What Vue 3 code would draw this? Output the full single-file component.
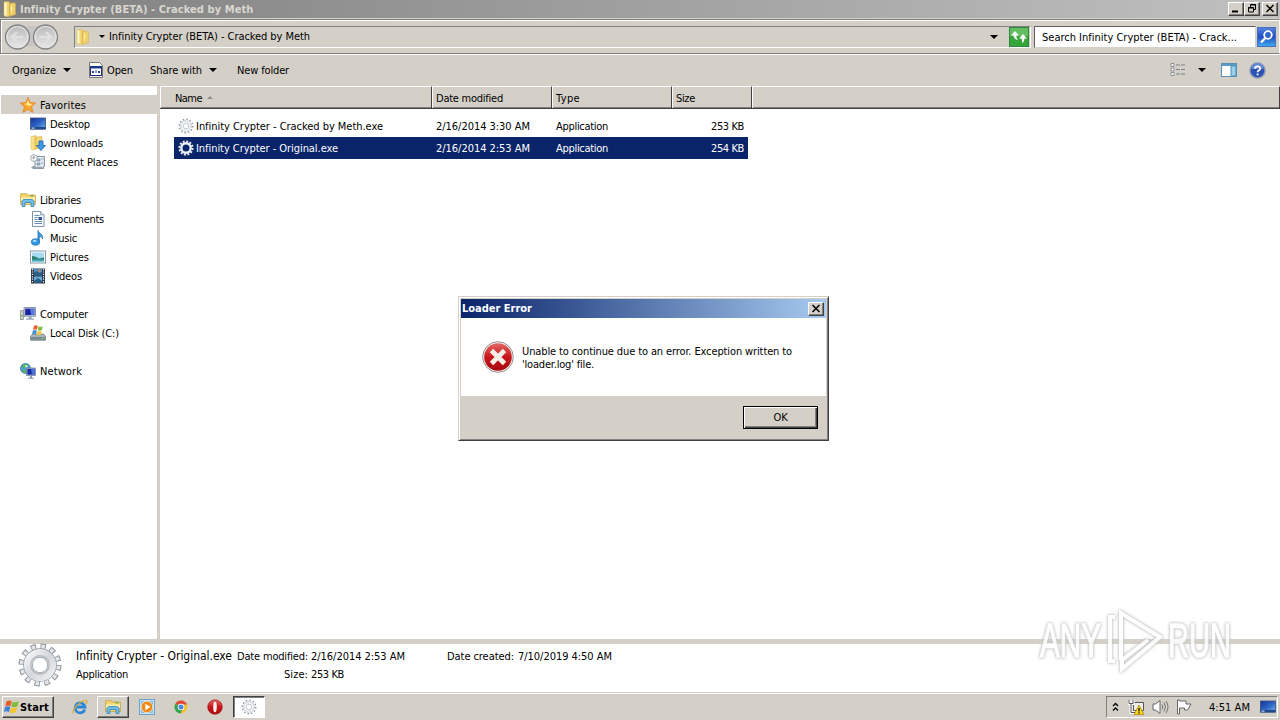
<template>
  <div class="screen">
    <svg class="sprite" width="0" height="0">
      <defs>
        <linearGradient id="gFolder" x1="0" x2="1"><stop offset="0" stop-color="#fdf0a0" /><stop offset="1" stop-color="#ecca5e" /></linearGradient>
        <linearGradient id="gBall" x1="0" x2="0" y1="0" y2="1"><stop offset="0" stop-color="#b8b8b8" /><stop offset=".5" stop-color="#d2d2d2" /><stop offset="1" stop-color="#e8e8e8" /></linearGradient>
        <linearGradient id="gScreen" x1="0" x2="1" y1="0" y2="1"><stop offset="0" stop-color="#16349a" /><stop offset=".5" stop-color="#2c62c4" /><stop offset="1" stop-color="#6fb0ee" /></linearGradient>
        <linearGradient id="gGear" x1="0" x2="1" y1="0" y2="1"><stop offset="0" stop-color="#f4f5f6" /><stop offset=".5" stop-color="#d3d7db" /><stop offset="1" stop-color="#eceeef" /></linearGradient>
        <linearGradient id="gRed" x1="0" x2="0" y1="0" y2="1"><stop offset="0" stop-color="#e26a66" /><stop offset=".5" stop-color="#c8161b" /><stop offset="1" stop-color="#a90a10" /></linearGradient>
        <linearGradient id="gGo" x1="0" x2="0" y1="0" y2="1"><stop offset="0" stop-color="#5b86e0" /><stop offset=".5" stop-color="#1f4fc8" /><stop offset="1" stop-color="#43b4f0" /></linearGradient>
      </defs>
      <symbol id="i-folder" viewBox="0 0 16 16">
        <path d="M2 1l4-.6 1.500.8V15.300l-4 .3-1.500-1z" fill="url(#gFolder)" stroke="#dcb94e" stroke-width=".5" />
        <path d="M7.500 2.600l4.500-.9 1.500 1V13.500l-6 1.800z" fill="#efd06a" stroke="#d2ad48" stroke-width=".5" />
        <path d="M3.500 2v12" stroke="#fffbd8" stroke-width="1.500" /><path d="M9 4l1.500 3L9 13z" fill="#fff3b4" />
      </symbol>
      <symbol id="i-app" viewBox="0 0 16 16">
        <path d="M1.500.5h10l3 3v12h-13z" fill="#fff" stroke="#777" />
        <rect x="2.500" y="4.500" width="11" height="9" fill="#fff" stroke="#1b2c78" />
        <path d="M2.500 5.500h11" stroke="#1b3c98" stroke-width="2" />
        <path d="M4 9h2v2H4zM7.500 8h1v3h-1zM10 9h2v2h-2z" fill="#23419c" />
      </symbol>
      <symbol id="i-star" viewBox="0 0 16 16">
        <path d="M8 .6l2.200 5 5.300.5-4 3.600 1.300 5.500L8 12.300 3.200 15.200l1.300-5.500-4-3.600 5.300-.5z" fill="#f8a92d" stroke="#df7b18" stroke-width=".8" />
        <path d="M8 3l1.500 3.600 3.300.3-3 2L8 8.500 4.500 7l2-.4z" fill="#ffe58e" />
      </symbol>
      <symbol id="i-desktop" viewBox="0 0 16 16">
        <rect x=".5" y="2" width="15" height="11" fill="url(#gScreen)" stroke="#3c4f78" stroke-width=".8" />
        <path d="M.5 11h15v2.500H.5z" fill="#224a8a" /><path d="M1.500 11.500h3v1.200h-3z" fill="#bcd6f4" />
      </symbol>
      <symbol id="i-downloads" viewBox="0 0 16 16">
        <path d="M1 1.500l5-1V14l-4 1-1-1z" fill="url(#gFolder)" stroke="#d0a840" stroke-width=".5" />
        <path d="M6 2l6-.5V13l-6 1z" fill="#f1d675" stroke="#d0a840" stroke-width=".5" />
        <path d="M9 6h4v4.500h2.500l-4.500 5-4.500-5H9z" fill="#3c9be4" stroke="#1f5fae" stroke-width=".8" />
      </symbol>
      <symbol id="i-recent" viewBox="0 0 16 16">
        <path d="M5 2.500h9.500v10h-1v2H3v-2h2z" fill="#e4eaf0" stroke="#7d8b99" stroke-width=".9" />
        <path d="M7 5h3v2H7zm4 0h2.500M7 9h3v2H7zm4 0h2.500" fill="#a9bacb" stroke="#7890a8" stroke-width=".7" />
        <circle cx="4" cy="4" r="3.400" fill="#f4f6f8" stroke="#8d99a5" stroke-width=".8" />
        <path d="M4 2v2.200H2.500" fill="none" stroke="#557" stroke-width=".8" />
        <path d="M1.500 13.500h11" stroke="#97a5b3" stroke-width="1.500" />
      </symbol>
      <symbol id="i-libraries" viewBox="0 0 16 16">
        <path d="M.6 3V1.700h6l1 1.300h7.800v9.500H.6z" fill="#f3d570" stroke="#c99b34" stroke-width=".7" />
        <path d="M1 5.500h14v3H1z" fill="#fdf0ac" />
        <path d="M2 14.500V9.300l1.500-1.800h9l1.500 1.800v5.200h-3v-4H5v4z" fill="#72bde6" stroke="#2f86bd" stroke-width=".8" />
        <path d="M10.500 3.800h3" stroke="#4aa03a" />
      </symbol>
      <symbol id="i-documents" viewBox="0 0 16 16">
        <path d="M2.500.5h8l3.500 3.300v11.700H2.500z" fill="#fbfdff" stroke="#7f94ab" />
        <path d="M10.500.5v3.500H14" fill="#d5e2ee" stroke="#7f94ab" stroke-width=".8" />
        <path d="M4.500 4.500h5M4.500 6.500h3M4.500 8.500h3M4.500 10.500h7.500M4.500 12.500h7.500" stroke="#6d8db4" />
        <path d="M8.500 6h3.500v3H8.500z" fill="#2c5892" />
      </symbol>
      <symbol id="i-music" viewBox="0 0 16 16">
        <path d="M8 .5c1 3 5.500 4 4.500 8.500C12 7 10.500 6 9.200 6v6.500H8z" fill="#3e9fe0" stroke="#2677be" stroke-width=".9" />
        <ellipse cx="5.500" cy="12" rx="4.200" ry="3.300" fill="#2f93dc" stroke="#1d6cb3" stroke-width=".6" />
        <ellipse cx="4.700" cy="11" rx="2" ry="1.200" fill="#9bd5f8" />
      </symbol>
      <symbol id="i-pictures" viewBox="0 0 16 16">
        <rect x=".5" y="2" width="15" height="12" fill="#fff" stroke="#8398a8" />
        <path d="M2 3.500h12v9H2z" fill="#a6daf0" /><path d="M2 7l3 .5L9 9.500l5-1v3H2z" fill="#2f8072" />
        <path d="M2 10.500h12v2H2z" fill="#45a8b8" />
      </symbol>
      <symbol id="i-videos" viewBox="0 0 16 16">
        <path d="M1 .5h14v15H1z" fill="#26323e" />
        <path d="M4 1h8v6.500H4z" fill="#4b90c4" /><path d="M4 8.500h8V15H4z" fill="#67b0dc" />
        <path d="M4 5l3-2 2 2 3-1v3.500H4zM4 13l4-3 4 3v2H4z" fill="#2a5c86" /><circle cx="9.500" cy="3" r="1.200" fill="#d98245" />
        <path d="M2.500 1v14M13.500 1v14" stroke="#eef" stroke-width="1.300" stroke-dasharray="1.200 1.200" />
      </symbol>
      <symbol id="i-computer" viewBox="0 0 16 16">
        <path d="M.6 4.500h2.800v9H.6z" fill="#cfd6cf" stroke="#75806f" stroke-width=".7" /><path d="M1.200 9h1.500v1.500H1.200z" fill="#6ab43e" />
        <path d="M4 1.500h11.500v8.800H4z" fill="#c9cfe0" stroke="#75809c" stroke-width=".8" />
        <path d="M5.200 2.700h9.100v6.400H5.200z" fill="#1722a4" /><path d="M10 2.700h4.300v6.400H11z" fill="#5a78dc" />
        <path d="M8.500 10.500h3v2H14v1.200H6v-1.200h2.500z" fill="#9aa3b5" />
      </symbol>
      <symbol id="i-disk" viewBox="0 0 16 16">
        <path d="M2.500 9h11l2 2.500v3.800H.5v-3.800z" fill="#a7b4ba" stroke="#6b7a80" stroke-width=".7" />
        <path d="M1 12h14v2.800H1z" fill="#76898f" /><path d="M11.500 12.800h2v1.200h-2z" fill="#7be04c" />
        <path d="M4 .8q2-1.100 3.800 0L7 4.700q-2-1-4 0z" fill="#e8602c" /><path d="M8.500 1.200q2 1 4.200 0l-.9 4q-2 .8-4 0z" fill="#82bb3c" />
        <path d="M2.900 5.500q2-.9 3.900 0L6 9.300q-2-1-4 0z" fill="#3f8fd6" /><path d="M7.600 5.900q2 .9 4 0l-.9 3.800q-2 .9-3.900 0z" fill="#f6c52f" />
      </symbol>
      <symbol id="i-network" viewBox="0 0 16 16">
        <circle cx="5.500" cy="5.500" r="5" fill="#4fa0d8" stroke="#286ca0" stroke-width=".7" />
        <path d="M2 2.500Q5 .5 8 1.500L6 4 3 5zM2 7l3.500-.5L6 9.500l-2 .8z" fill="#58b64b" /><path d="M5 2l3 1-2 2z" fill="#e2f6d4" />
        <path d="M6.500 5h9v7.500h-9z" fill="#c0c9dd" stroke="#6c7896" stroke-width=".7" /><path d="M7.300 5.800h7.500v5.900H7.300z" fill="#1829a8" />
        <path d="M11 5.800h3.800v5.900H12z" fill="#4b72d8" /><path d="M10 12.700h2v2h2v1H8v-1h2z" fill="#8e98ac" />
      </symbol>
      <symbol id="i-gear" viewBox="0 0 44 44">
        <circle cx="22" cy="22" r="18.500" fill="none" stroke="#8a929a" stroke-width="6" stroke-dasharray="5.200 4.486" />
        <circle cx="22" cy="22" r="18" fill="none" stroke="#e4e7ea" stroke-width="5" stroke-dasharray="3.400 6.024" stroke-dashoffset="-.8" />
        <circle cx="22" cy="22" r="12" fill="none" stroke="#8d959c" stroke-width="9.500" />
        <circle cx="22" cy="22" r="12" fill="none" stroke="url(#gGear)" stroke-width="8.200" />
        <circle cx="22" cy="22" r="9.200" fill="none" stroke="#b4babf" stroke-width="1.400" />
      </symbol>
      <symbol id="i-cog" viewBox="0 0 16 16">
        <circle cx="8" cy="8" r="6.600" fill="none" stroke="currentColor" stroke-width="2" stroke-dasharray="1.900 1.556" />
        <circle cx="8" cy="8" r="4.700" fill="none" stroke="currentColor" stroke-width="2.400" />
      </symbol>
      <symbol id="i-cogline" viewBox="0 0 16 16">
        <circle cx="8" cy="8" r="6.700" fill="none" stroke="#8c9aa5" stroke-width="1.500" stroke-dasharray="1.500 2.008" />
        <circle cx="8" cy="8" r="5.300" fill="#f2f4f5" stroke="#b1bbc2" stroke-width=".9" stroke-dasharray="2 .8" />
        <circle cx="8" cy="8" r="2.700" fill="#fff" stroke="#94a1aa" stroke-width=".9" stroke-dasharray="1.500 .8" />
      </symbol>
      <symbol id="i-flag" viewBox="0 0 16 16">
        <path d="M2.500 2.300q2.700-1.700 5.200 0L6.500 7.200q-2.700-1.400-5.200 0z" fill="#e8592a" /><path d="M8.500 2.700q2.700 1.400 6.300-.5l-1.400 5q-3 1.600-6 .4z" fill="#80ba3a" />
        <path d="M1.100 8q2.500-1.400 5.200 0L5 13q-2.600-1.400-5 0z" fill="#3a80d6" /><path d="M7.200 8.400q2.800 1.300 6-.4l-1.400 5q-3 1.600-6 .4z" fill="#f8c22c" />
      </symbol>
      <symbol id="i-ie" viewBox="0 0 16 16">
        <path d="M12.800 10.500A5 5 0 1 1 13 8H4" fill="none" stroke="#2b86d8" stroke-width="2.800" />
        <path d="M1.500 14.500C-.5 11 8 1 14.500 1.500c1 .5.500 2-.5 3.500" fill="none" stroke="#d9b02e" stroke-width="1.200" />
      </symbol>
      <symbol id="i-media" viewBox="0 0 16 16">
        <rect x=".5" y=".5" width="15" height="15" fill="#c9e1f4" stroke="#69a3d0" /><rect x="2" y="2" width="12" height="12" fill="#8dbde4" />
        <circle cx="8" cy="8" r="5.800" fill="#f28a17" stroke="#fff1d8" stroke-width=".7" /><path d="M6.300 4.800v6.400L11.500 8z" fill="#fff" />
      </symbol>
      <symbol id="i-chrome" viewBox="0 0 16 16">
        <circle cx="8" cy="8" r="6.500" fill="#f2c32c" /><path d="M8 8L2.400 4.700A6.500 6.500 0 0 1 14 5.500H8z" fill="#df4a3c" />
        <path d="M8 8L2.400 4.700A6.500 6.500 0 0 0 7.500 14.500l2-4z" fill="#35a353" />
        <circle cx="8" cy="8" r="3.300" fill="#fff" /><circle cx="8" cy="8" r="2.500" fill="#4b87e2" />
      </symbol>
      <symbol id="i-opera" viewBox="0 0 16 16">
        <circle cx="8" cy="8" r="7.300" fill="url(#gRed)" stroke="#9c1014" stroke-width=".6" /><ellipse cx="8" cy="8" rx="1.800" ry="5.300" fill="#f6eeee" />
      </symbol>
    </svg>

    <header class="titlebar">
      <svg class="ico"><use href="#i-folder" /></svg>
      <b v-fit="233">Infinity Crypter (BETA) - Cracked by Meth</b>
      <div class="win-buttons">
        <button class="wb"><svg width="12" height="10"><path d="M3 8.500h6" stroke="#000" stroke-width="2" /></svg></button>
        <button class="wb"><svg width="13" height="11"><path d="M5.500 4V1.500h5v5H8M5 2h6" fill="none" stroke="#000" /><path d="M3.500 4.500h5v4.500h-5zM3 5h6" fill="none" stroke="#000" /></svg></button>
        <button class="wb last"><svg width="12" height="10"><path d="M3.500 2l7 7M10.500 2l-7 7" stroke="#000" stroke-width="1.500" /></svg></button>
      </div>
    </header>

    <nav class="navbar">
      <svg class="balls" width="58" height="30">
        <path d="M17 4h28v20H17z" fill="#c6c5c3" />
        <g v-for="x in [15.5, 43.5]" :key="x">
          <circle :cx="x" cy="15" r="12" fill="url(#gBall)" stroke="#858585" stroke-width="1.300" />
          <circle :cx="x" cy="15" r="10.500" fill="none" stroke="#e6e6e6" stroke-width="1" />
        </g>
        <path d="M21.500 15h-11M15 10l-5 5 5 5M37.500 15h11M44 10l5 5-5 5" fill="none" stroke="#e0e0e0" stroke-width="2.400" />
      </svg>
      <div class="address">
        <svg class="ico"><use href="#i-folder" /></svg>
        <i class="arrow small"></i>
        <span v-fit="201">Infinity Crypter (BETA) - Cracked by Meth</span>
        <i class="arrow drop"></i>
        <svg class="refresh" width="20" height="20">
          <rect width="20" height="20" fill="#35a53c" /><path d="M0 0h20v9H0z" fill="#63bd62" />
          <rect x=".5" y=".5" width="19" height="19" fill="none" stroke="#2e8a38" />
          <path d="M6 4L2 8.500h2.500q.5 4 4.500 4.500Q7 11 7.500 8.500H10zM14 7l4 4.500h-2.500q-.5 4-2.500 4.500.5-2-.5-4.500H10z" fill="#fff" />
        </svg>
      </div>
      <div class="search"><span v-fit="195">Search Infinity Crypter (BETA) - Crack...</span></div>
      <svg class="go" width="19" height="20">
        <rect width="19" height="20" fill="url(#gGo)" /><rect x=".5" y=".5" width="18" height="19" fill="none" stroke="#4a70b8" />
        <circle cx="11" cy="8" r="3.800" fill="#2d66ca" stroke="#fff" stroke-width="1.800" /><path d="M8.300 11L4 15.500" stroke="#fff" stroke-width="2.400" />
      </svg>
    </nav>

    <div class="toolbar">
      <span v-fit="44">Organize</span><i class="arrow"></i>
      <svg class="ico open"><use href="#i-app" /></svg><span v-fit="26">Open</span>
      <span v-fit="52" class="share">Share with</span><i class="arrow"></i>
      <span v-fit="52" class="newf">New folder</span>
      <svg class="views" width="16" height="14">
        <path d="M1 .5h3v3H1zM1 5h3v3H1zM1 9.500h3v3H1z" fill="#fff" stroke="#8b9097" /><path d="M6 2h4M11 2h4M6 6.500h4M11 6.500h4M6 11h4M11 11h4" stroke="#7b8088" />
      </svg>
      <i class="arrow"></i>
      <svg class="pane" width="16" height="14">
        <rect x=".5" y=".5" width="15" height="13" fill="#fff" stroke="#588fb4" /><path d="M1 2h14" stroke="#5c9cc3" stroke-width="2" />
        <path d="M10 3h5v10h-5z" fill="#9bd0e8" stroke="#4a8fb8" />
      </svg>
      <svg class="help" width="17" height="17">
        <circle cx="8.500" cy="8.500" r="7.500" fill="#2c50b4" stroke="#8796b4" stroke-width="1.500" /><path d="M2.500 7a6 6 0 0 1 12 0z" fill="#6488d6" />
        <path d="M6 6.700q0-2.400 2.600-2.400t2.600 2.100q0 1.400-1.600 2.200-1 .5-1 1.700" fill="none" stroke="#fff" stroke-width="1.700" /><path d="M7.700 11.500h1.800v1.800H7.700z" fill="#fff" />
      </svg>
    </div>

    <div class="body">
      <aside class="sidebar">
        <div v-for="(item, i) in places" :key="i" class="place" :class="{ child: item.child, current: i === 0 }">
          <template v-if="item.label">
            <svg class="ico"><use :href="'#i-' + item.icon" /></svg>
            <span v-fit="item.w">{{ item.label }}</span>
          </template>
        </div>
      </aside>
      <div class="splitter"></div>
      <main class="files">
        <div class="columns">
          <div class="col name"><span v-fit="27">Name</span><i class="sort"></i></div>
          <div class="col date"><span v-fit="67">Date modified</span></div>
          <div class="col type"><span v-fit="24">Type</span></div>
          <div class="col size"><span v-fit="19">Size</span></div>
          <div class="col rest"></div>
        </div>
        <div class="rows">
          <div v-for="file in files" :key="file.name" class="row" :class="{ selected: file.selected }">
            <svg class="ico"><use :href="file.selected ? '#i-cog' : '#i-cogline'" /></svg>
            <div class="c-name"><span v-fit="file.w">{{ file.name }}</span></div>
            <div class="c-date"><span v-fit="94">{{ file.date }}</span></div>
            <div class="c-type"><span v-fit="52">Application</span></div>
            <div class="c-size"><span v-fit="33">{{ file.size }}</span></div>
          </div>
        </div>
      </main>
    </div>

    <footer class="details">
      <svg class="big-gear" width="44" height="44"><use href="#i-gear" /></svg>
      <div class="d1"><span v-fit="156" class="big">Infinity Crypter - Original.exe</span><span v-fit="52">Application</span></div>
      <div class="d2"><span v-fit="71">Date modified:</span><span v-fit="24">Size:</span></div>
      <div class="d3"><span v-fit="94">2/16/2014 2:53 AM</span><span v-fit="33">253 KB</span></div>
      <div class="d4"><span v-fit="67">Date created:</span></div>
      <div class="d3"><span v-fit="94">7/10/2019 4:50 AM</span></div>
    </footer>

    <div class="taskbar">
      <button class="start"><svg class="ico"><use href="#i-flag" /></svg><b v-fit="29">Start</b></button>
      <div class="task ie"><svg class="ico"><use href="#i-ie" /></svg></div>
      <div class="task raised"><svg class="ico"><use href="#i-libraries" /></svg></div>
      <div class="task media"><svg class="ico"><use href="#i-media" /></svg></div>
      <div class="task"><svg class="ico"><use href="#i-chrome" /></svg></div>
      <div class="task"><svg class="ico"><use href="#i-opera" /></svg></div>
      <div class="task pressed"><svg class="ico"><use href="#i-cogline" /></svg></div>
      <div class="tray">
        <svg class="chev" width="7" height="10"><path d="M1 4l2.500-2.500L6 4M1 8.500L3.500 6 6 8.500" fill="none" stroke="#000" stroke-width="1.300" /></svg>
        <svg class="t-net" width="17" height="16">
          <path d="M5.500 3.500h10v8h-10z" fill="#eee" stroke="#555" />
          <path d="M1 .5v4h4v-4M3 5v8.500h5" fill="none" stroke="#fff" stroke-width="3" />
          <path d="M1 .5v4h4v-4M3 5v8.500h5" fill="none" stroke="#555" />
          <path d="M11 6l5 9.500H6z" fill="#f7d61f" stroke="#b38c10" stroke-width=".8" /><path d="M11 9v3.500M11 13.300v1.200" stroke="#222" stroke-width="1.400" />
        </svg>
        <svg class="t-vol" width="17" height="16">
          <path d="M1 5h2.500L8 1.500v13L3.500 11H1z" fill="#fff" stroke="#666" /><path d="M10 5.500q1.500 2.500 0 5M12 3.500q3 4.500 0 9M14 2q4 6 0 12" fill="none" stroke="#777" />
        </svg>
        <svg class="t-flag" width="17" height="16"><path d="M1.500 1v14h2v-6h5v2h3l3.500-6h-5V2h-6.500V1z" fill="#fff" stroke="#666" /></svg>
        <span v-fit="41">4:51 AM</span>
        <svg class="ico t-desk"><use href="#i-desktop" /></svg>
      </div>
    </div>

    <svg class="watermark" width="210" height="76" viewBox="0 0 210 76">
      <g class="mark">
        <text x="6" y="52" textLength="61" lengthAdjust="spacingAndGlyphs">ANY</text>
        <text x="134" y="52" textLength="63" lengthAdjust="spacingAndGlyphs">RUN</text>
        <path d="M81 12h-5v44h5M87 55V8l39 24-38 32v-9l26-20" fill="none" stroke="#fff" stroke-width="4" />
      </g>
    </svg>

    <section class="dialog">
      <div class="dialog-title">
        <b v-fit="70">Loader Error</b>
        <button class="wb"><svg width="12" height="10"><path d="M3.500 2l7 7M10.500 2l-7 7" stroke="#000" stroke-width="1.500" /></svg></button>
      </div>
      <div class="dialog-body">
        <svg width="32" height="32">
          <circle cx="16" cy="16" r="15.300" fill="#f3efef" stroke="#9b8d8d" /><circle cx="16" cy="16" r="13.800" fill="url(#gRed)" />
          <path d="M9.500 9.500l13 13M22.500 9.500l-13 13" stroke="#f3efe8" stroke-width="4.800" />
        </svg>
        <p><span v-fit="270">Unable to continue due to an error. Exception written to</span><span v-fit="72">'loader.log' file.</span></p>
      </div>
      <div class="dialog-foot"><button class="ok"><span v-fit="14">OK</span></button></div>
    </section>
  </div>
</template>

<script setup>
// spreads a label over its Tahoma width, whatever sans font is installed
const vFit = {
  mounted(el, { value }) {
    const natural = el.getBoundingClientRect().width
    el.style.letterSpacing = (value - natural) / el.textContent.length + 'px'
  }
}

const places = [
  { label: 'Favorites', icon: 'star', w: 46 },
  { label: 'Desktop', icon: 'desktop', w: 40, child: true },
  { label: 'Downloads', icon: 'downloads', w: 53, child: true },
  { label: 'Recent Places', icon: 'recent', w: 68, child: true },
  {},
  { label: 'Libraries', icon: 'libraries', w: 41 },
  { label: 'Documents', icon: 'documents', w: 54, child: true },
  { label: 'Music', icon: 'music', w: 27, child: true },
  { label: 'Pictures', icon: 'pictures', w: 39, child: true },
  { label: 'Videos', icon: 'videos', w: 32, child: true },
  {},
  { label: 'Computer', icon: 'computer', w: 48 },
  { label: 'Local Disk (C:)', icon: 'disk', w: 69, child: true },
  {},
  { label: 'Network', icon: 'network', w: 42 }
]

const files = [
  { name: 'Infinity Crypter - Cracked by Meth.exe', date: '2/16/2014 3:30 AM', size: '253 KB', w: 187 },
  { name: 'Infinity Crypter - Original.exe', date: '2/16/2014 2:53 AM', size: '254 KB', w: 142, selected: true }
]
</script>

<style>
body { margin: 0; overflow: hidden; }
</style>

<style scoped>
.screen {
  position: relative;
  width: 1280px;
  height: 720px;
  overflow: hidden;
  display: flex;
  flex-direction: column;
  background: #d4d0c8;
  color: #000;
  font: 11px/13px "DejaVu Sans Condensed", "DejaVu Sans", sans-serif;
  font-stretch: condensed;
}
.screen * { box-sizing: border-box; }
.sprite { position: absolute; }
span, b { white-space: nowrap; flex: none; }
svg { flex: none; display: block; }
.ico { width: 16px; height: 16px; }
button { font: inherit; padding: 0; }
.titlebar {
  height: 18px;
  flex: none;
  display: flex;
  align-items: center;
  padding-left: 2px;
  background: linear-gradient(90deg, #808080, #c0c0c0);
  color: #dad7d0;
}
.titlebar b { margin-left: 2px; }
.win-buttons { margin-left: auto; display: flex; padding-right: 2px; }
.wb {
  width: 16px;
  height: 14px;
  background: #d4d0c8;
  border: 1px solid;
  border-color: #fff #404040 #404040 #fff;
  box-shadow: inset -1px -1px #808080;
  display: flex;
}
.wb.last { margin-left: 2px; }
.navbar {
  height: 35px;
  flex: none;
  margin-top: 1px;
  display: flex;
  align-items: center;
  border: 1px solid #808080;
  border-right-color: #fff;
  box-shadow: inset 1px 1px #fff, 0 1px #fff;
  padding-left: 1px;
}
.address {
  margin-left: 14px;
  width: 957px;
  height: 22px;
  display: flex;
  align-items: center;
  padding-right: 1px;
  border: 1px solid;
  border-color: #808080 #fff #fff #808080;
}
.arrow { flex: none; width: 0; border: 4px solid transparent; border-top-color: #000; border-bottom: 0; }
.arrow.small { border-width: 3px; border-bottom: 0; margin: 0 4px 0 8px; }
.arrow.drop { margin-left: auto; margin-right: 11px; }
.search {
  margin-left: 3px;
  width: 222px;
  height: 22px;
  display: flex;
  align-items: center;
  padding-left: 7px;
  padding-top: 2px;
  background: #fff;
  border: 1px solid #808080;
  border-color: #606060 #d4d0c8 #d4d0c8 #606060;
}
.go { margin-left: 1px; }
.toolbar { height: 32px; flex: none; display: flex; align-items: center; padding: 0 15px 0 12px; }
.toolbar .arrow { margin-left: 7px; }
.open { margin: 0 3px 0 17px; }
.share { margin-left: 17px; }
.newf { margin-left: 20px; }
.views { margin-left: auto; }
.toolbar .views + .arrow { margin-left: 12px; }
.pane { margin-left: 15px; }
.help { margin-left: 12px; margin-right: -1px; }
.body { height: 553px; flex: none; display: flex; background: #fff; }
.sidebar { width: 157px; padding: 9px 0 0 1px; }
.place { height: 19px; display: flex; align-items: center; padding-left: 19px; }
.place.child { padding-left: 29px; }
.place.current { background: #d4d0c8; }
.place span { margin-left: 4px; padding-top: 2px; }
.splitter { width: 3px; background: #d4d0c8; }
.files { flex: 1; }
.columns { height: 23px; display: flex; background: #d4d0c8; border-bottom: 1px solid #404040; box-shadow: inset 0 -1px #808080; }
.col {
  display: flex;
  align-items: center;
  padding-left: 4px;
  padding-top: 2px;
  border-top: 1px solid #fff;
  border-left: 1px solid #fff;
  border-right: 1px solid #404040;
}
.col.name { width: 272px; padding-left: 14px; }
.col.date, .col.type { width: 120px; padding-left: 3px; }
.col.size { width: 80px; padding-left: 3px; }
.col.rest { flex: 1; }
.sort { border: 3px solid transparent; border-top: 0; border-bottom: 3px solid #909090; margin: -3px 0 0 5px; }
.rows { padding: 6px 0 0 14px; }
.row { width: 574px; height: 22px; display: flex; align-items: center; padding-left: 4px; }
.row.selected { background: #0a246a; color: #fff; }
.row.selected .ico { color: #eef1f6; }
.c-name { width: 240px; padding-left: 2px; }
.c-date { width: 122px; padding-left: 2px; }
.c-type { width: 114px; }
.c-size { width: 74px; text-align: right; }
.details { height: 54px; flex: none; display: flex; background: #fff; border-top: 5px solid #d4d0c8; border-bottom: 1px solid #d4d0c8; padding-left: 18px; }
.big-gear { margin-top: -1px; }
.details > div { display: grid; grid-auto-rows: 18px; padding-top: 6px; justify-items: start; align-content: start; }
.details .d1 { margin-left: 14px; width: 160px; }
.details .d2 { width: 72px; justify-items: end; }
.details .d3 { width: 94px; margin-left: 3px; }
.details .d4 { width: 68px; margin-left: 42px; }
.big { font-size: 12px; }
.taskbar { height: 27px; flex: none; display: flex; align-items: center; border-top: 1px solid #fff; padding: 0 2px; }
.start {
  width: 52px;
  height: 22px;
  display: flex;
  align-items: center;
  background: #d4d0c8;
  border: 1px solid;
  border-color: #fff #404040 #404040 #fff;
  box-shadow: inset -1px -1px #808080;
}
.start .ico { margin-left: 1px; }
.task { width: 34px; height: 22px; display: flex; align-items: center; justify-content: center; }
.task.ie { width: 42px; padding-left: 10px; }
.task.raised, .task.pressed { width: 32px; margin-left: 1px; border: 1px solid; }
.task.raised { border-color: #fff #404040 #404040 #fff; box-shadow: inset -1px -1px #808080; }
.task.media { margin-left: 1px; }
.task.pressed { background: #fff; border-color: #404040 #fff #fff #404040; box-shadow: inset 1px 1px #808080; }
.tray {
  margin-left: auto;
  width: 172px;
  height: 22px;
  display: flex;
  align-items: center;
  padding-left: 6px;
  border: 1px solid;
  border-color: #808080 #fff #fff #808080;
}
.chev { margin-left: -1px; }
.t-net { margin-left: 9px; }
.t-vol { margin-left: 7px; }
.t-flag { margin-left: 7px; }
.tray span { margin-left: 16px; }
.t-desk { margin-left: 10px; }
.watermark { position: absolute; left: 1034px; top: 605px; }
.mark { filter: drop-shadow(0 0 1.5px #b4b4b4) drop-shadow(0 0 1px #d4d4d4); opacity: .85; }
.mark text { font: 49px/60px "Liberation Sans", sans-serif; fill: #fff; stroke: #fff; stroke-width: 1.5px; }
.dialog {
  position: absolute;
  left: 458px;
  top: 296px;
  width: 371px;
  height: 145px;
  background: #d4d0c8;
  border: 1px solid;
  border-color: #d4d0c8 #404040 #404040 #d4d0c8;
  box-shadow: inset 1px 1px #fff, inset -1px -1px #808080;
  padding: 2px;
}
.dialog-title {
  height: 19px;
  display: flex;
  align-items: center;
  padding: 0 2px 0 1px;
  color: #fff;
  background: linear-gradient(90deg, #0a246a, #a6caf0);
}
.dialog-title .wb { margin-left: auto; }
.dialog-body { height: 78px; display: flex; background: #fff; padding: 23px 0 0 21px; }
.dialog-body p { margin: 4px 0 0 8px; display: flex; flex-direction: column; align-items: flex-start; }
.dialog-foot { padding: 10px 8px 0 0; display: flex; justify-content: flex-end; }
.ok {
  width: 75px;
  height: 23px;
  background: #d4d0c8;
  border: 1px solid #000;
  box-shadow: inset 1px 1px #fff, inset -1px -1px #404040, inset -2px -2px #808080;
}
</style>
